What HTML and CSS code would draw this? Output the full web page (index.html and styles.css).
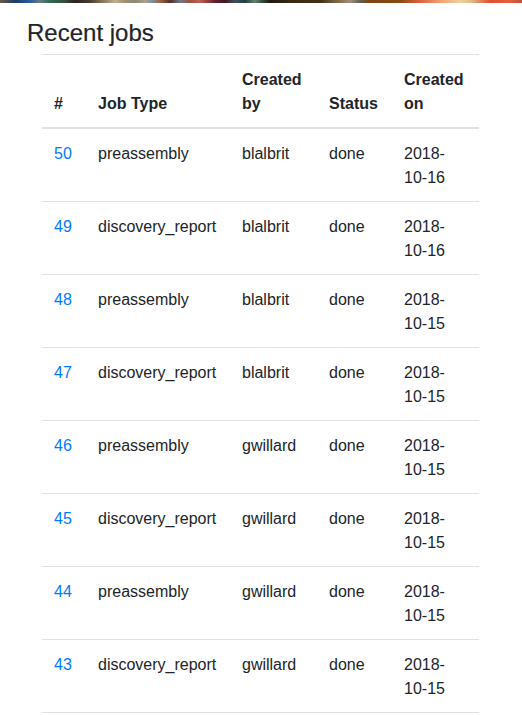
FILE: index.html
```html
<!DOCTYPE html>
<html>
<head>
<meta charset="utf-8">
<link rel="stylesheet" href="styles.css">
</head>
<body>
<div class="banner"></div>
<div class="content">
  <h4 class="title">Recent jobs</h4>
  <table class="jobs">
    <thead>
      <tr>
        <th class="c-id">#</th>
        <th class="c-type">Job Type</th>
        <th class="c-by">Created by</th>
        <th class="c-status">Status</th>
        <th class="c-on">Created on</th>
      </tr>
    </thead>
    <tbody>
      <tr><td><a href="#">50</a></td><td>preassembly</td><td>blalbrit</td><td>done</td><td>2018-10-16</td></tr>
      <tr><td><a href="#">49</a></td><td>discovery_report</td><td>blalbrit</td><td>done</td><td>2018-10-16</td></tr>
      <tr><td><a href="#">48</a></td><td>preassembly</td><td>blalbrit</td><td>done</td><td>2018-10-15</td></tr>
      <tr><td><a href="#">47</a></td><td>discovery_report</td><td>blalbrit</td><td>done</td><td>2018-10-15</td></tr>
      <tr><td><a href="#">46</a></td><td>preassembly</td><td>gwillard</td><td>done</td><td>2018-10-15</td></tr>
      <tr><td><a href="#">45</a></td><td>discovery_report</td><td>gwillard</td><td>done</td><td>2018-10-15</td></tr>
      <tr><td><a href="#">44</a></td><td>preassembly</td><td>gwillard</td><td>done</td><td>2018-10-15</td></tr>
      <tr><td><a href="#">43</a></td><td>discovery_report</td><td>gwillard</td><td>done</td><td>2018-10-15</td></tr>
    </tbody>
  </table>
</div>
</body>
</html>
```
FILE: styles.css
```css
html, body {
  margin: 0;
  padding: 0;
  background: #fff;
}
body {
  font-family: "Liberation Sans", Arial, sans-serif;
  font-size: 16px;
  line-height: 1.5;
  color: #212529;
  overflow: hidden;
}
.banner {
  height: 3px;
  background: linear-gradient(to right,
    #6b5a40 0px, #1f3a6b 15px, #2c5aa0 30px, #6a7a80 40px, #2f6a50 50px,
    #3a4a40 65px, #2a2420 75px, #4a3a30 90px, #7a6a50 100px, #c0b090 115px,
    #a09070 125px, #8a8a7a 135px, #b0a090 145px, #7a90a0 152px, #a06040 160px,
    #503028 170px, #6a7a8a 180px, #a05040 190px, #c06050 200px, #602030 215px,
    #401820 225px, #405060 235px, #204040 245px, #6a8070 255px, #305040 262px,
    #201810 270px, #3a2810 290px, #403018 320px, #8a7050 340px, #a09080 350px,
    #606050 360px, #804010 370px, #8a4a10 400px, #e06040 420px, #f0a070 440px,
    #f0d0a0 460px, #e0c090 470px, #e05030 490px, #e06040 510px, #c05040 522px);
}
.content {
  padding: 15px 0 0 27px;
}
.title {
  margin: 0 0 7px 0;
  font-size: 24px;
  font-weight: 500;
  line-height: 29px;
  color: #212529;
  -webkit-text-stroke: 0.2px #212529;
}
.jobs {
  margin-left: 15px;
  width: 437px;
  table-layout: fixed;
  border-collapse: collapse;
}
.jobs th, .jobs td {
  padding: 13px 12px 11px 12px;
  text-align: left;
  vertical-align: top;
  border-top: 1px solid #dee2e6;
}
.jobs th {
  font-weight: 700;
  vertical-align: bottom;
  border-bottom: 2px solid #dee2e6;
}
.jobs tbody td {
  border-bottom: 1px solid #dee2e6;
}
.c-id { width: 20px; }
.c-type { width: 120px; }
.c-by { width: 63px; }
.c-status { width: 51px; }
.c-on { width: 63px; }
.jobs a {
  color: #007bff;
  text-decoration: none;
}
```
